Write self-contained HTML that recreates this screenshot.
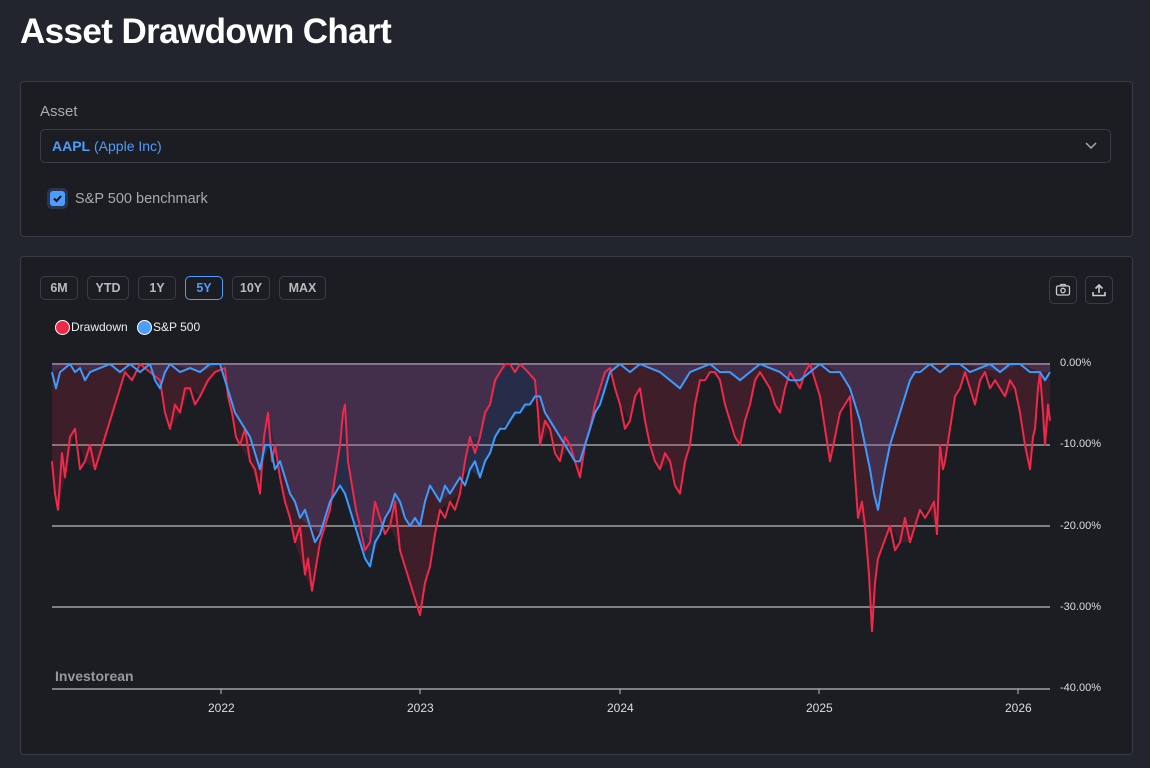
<!DOCTYPE html>
<html><head><meta charset="utf-8"><style>
body{margin:0;width:1150px;height:768px;background:#22252e;font-family:"Liberation Sans",sans-serif;position:relative;overflow:hidden;color:#ddd}
.abs{position:absolute}
h1{position:absolute;left:20px;top:12px;margin:0;font-size:35px;font-weight:bold;color:#fff;letter-spacing:-0.6px}
.panel{position:absolute;left:20px;width:1111px;background:#1b1d23;border:1px solid #383b44;border-radius:4px}
.btn{position:absolute;top:276px;height:24px;border:1px solid #3a3d45;border-radius:5px;font-size:12.5px;font-weight:bold;color:#bbb;text-align:center;line-height:23px;box-sizing:border-box}
.ib{position:absolute;top:276px;width:28px;height:28px;border:1px solid #3a3d45;border-radius:5px;box-sizing:border-box}
.yl{position:absolute;left:1060px;font-size:11px;color:#ddd}
.xl{position:absolute;top:701px;font-size:12px;color:#ddd}
</style></head><body>
<h1>Asset Drawdown Chart</h1>
<div class="panel" style="top:81px;height:154px"></div>
<div class="abs" style="left:40px;top:103px;font-size:15px;color:#aaa">Asset</div>
<div class="abs" style="left:40px;top:129px;width:1071px;height:34px;border:1px solid #3a3d45;border-radius:5px;box-sizing:border-box"></div>
<div class="abs" style="left:52px;top:138px;font-size:14px;color:#4d9dff"><b>AAPL</b> (Apple Inc)</div>
<svg class="abs" style="left:1085px;top:141px" width="12" height="10"><path d="M1 2 L6 7 L11 2" stroke="#aaa" stroke-width="1.5" fill="none"/></svg>
<div class="abs" style="left:47px;top:188px;width:21px;height:21px;border-radius:5px;background:#2a3550"></div>
<div class="abs" style="left:50px;top:191px;width:15px;height:15px;border-radius:3px;background:#4d9dff"></div>
<svg class="abs" style="left:50px;top:191px" width="15" height="15"><path d="M4 7.5 L6.5 10 L11 5" stroke="#111" stroke-width="2" fill="none"/></svg>
<div class="abs" style="left:75px;top:191px;font-size:14.5px;color:#aaa">S&amp;P 500 benchmark</div>

<div class="panel" style="top:256px;height:497px"></div>
<div class="btn" style="left:40px;width:38px">6M</div>
<div class="btn" style="left:87px;width:42px">YTD</div>
<div class="btn" style="left:138px;width:38px">1Y</div>
<div class="btn" style="left:185px;width:38px;border-color:#4d9dff;color:#4d9dff">5Y</div>
<div class="btn" style="left:232px;width:38px">10Y</div>
<div class="btn" style="left:279px;width:47px">MAX</div>
<div class="ib" style="left:1049px"></div><div class="ib" style="left:1085px"></div>
<svg class="abs" style="left:1055px;top:283px" width="16" height="14"><rect x="1.5" y="3" width="13" height="9" rx="1.5" stroke="#ccc" fill="none" stroke-width="1.3"/><path d="M5 3 L6 1.5 H10 L11 3" stroke="#ccc" fill="none" stroke-width="1.3"/><circle cx="8" cy="7.5" r="2.2" stroke="#ccc" fill="none" stroke-width="1.3"/></svg>
<svg class="abs" style="left:1091px;top:282px" width="16" height="16"><path d="M8 11 V3 M4.5 6.5 L8 3 L11.5 6.5 M2 10 V13.5 H14 V10" stroke="#ccc" fill="none" stroke-width="1.6"/></svg>
<div class="abs" style="left:55px;top:320px;width:13px;height:13px;border-radius:50%;background:#f0284a;border:1px solid #fff"></div>
<div class="abs" style="left:71px;top:320px;font-size:12px;color:#eee">Drawdown</div>
<div class="abs" style="left:137px;top:320px;width:13px;height:13px;border-radius:50%;background:#4d9dff;border:1px solid #fff"></div>
<div class="abs" style="left:153px;top:320px;font-size:12px;color:#eee">S&amp;P 500</div>

<svg class="abs" style="left:0;top:0" width="1150" height="768">
<g stroke="#bbb" stroke-width="1.2"><line x1="52" y1="364" x2="1050" y2="364"/><line x1="52" y1="445" x2="1050" y2="445"/><line x1="52" y1="526" x2="1050" y2="526"/><line x1="52" y1="607" x2="1050" y2="607"/><line x1="52" y1="689" x2="1050" y2="689"/></g>
<g stroke="#bbb"><line x1="221" y1="689" x2="221" y2="694"/><line x1="420" y1="689" x2="420" y2="694"/><line x1="620" y1="689" x2="620" y2="694"/><line x1="819" y1="689" x2="819" y2="694"/><line x1="1018" y1="689" x2="1018" y2="694"/></g>
<g transform="translate(0,364) scale(1,8.1)">
<polygon fill="rgba(240,40,74,0.17)" points="52,0 52,12 58,18 65,14 75,8 85,12 95,13 105,9 115,5 125,1 140,0 160,2 170,8 180,6 190,3 200,4 215,1 225,0.5 232,6 240,10 250,12 260,16 268,6 275,10 285,17 295,22 305,26 312,28 320,22 330,18 340,10 345,5 352,15 360,20 370,22 380,19 390,20 400,23 410,27 420,31 430,25 440,18 450,17 460,16 470,9 480,9 490,5 500,1 510,0 520,0 535,2 540,10 550,8 560,12 570,10 580,14 590,8 600,3 610,0.5 620,5 630,7 640,3 650,10 660,13 670,12 680,16 690,10 700,2 710,1 720,2 730,7 740,10 750,5 760,1 770,3 780,6 790,1 800,3 810,0 820,4 830,12 840,6 850,4 858,19 865,20 872,33 878,24 890,20 900,22 910,22 920,18 930,18 937,21 940,10 945,12 955,4 965,1 975,5 985,1 995,2 1005,4 1015,3 1020,6 1030,13 1035,8 1040,1 1045,10 1050,7 1050,0"/>
<polygon fill="rgba(90,110,220,0.2)" points="52,0 52,1 70,0 90,1 110,0 150,0 160,3 170,0 200,1 220,0 230,4 240,7 250,9 260,13 270,10 280,12 290,16 300,19 310,20 320,21 330,17 340,15 350,18 360,22 370,25 380,21 390,18 400,17 410,20 420,20 430,15 440,17 450,16 460,14 470,13 480,14 490,11 500,8 510,7 520,6 530,5 540,4 550,7 560,9 570,11 580,12 590,8 600,5 610,1 620,0 640,0 660,1 680,3 690,1 710,0 740,2 760,0 780,1 800,2 820,0 840,1 850,3 860,7 870,13 878,18 885,13 895,8 905,4 915,1 930,0 960,0 1000,1 1020,0 1040,1 1050,1 1050,0"/>
<polyline fill="none" stroke="#f0284a" stroke-width="2" vector-effect="non-scaling-stroke" stroke-linejoin="round" points="52,12 55,16 58,18 62,11 65,14 70,9 75,8 80,13 85,12 90,10 95,13 100,11 105,9 110,7 115,5 120,3 125,1 132,2 140,0 150,1 160,2 165,6 170,8 175,5 180,6 185,3 190,3 195,5 200,4 208,2 215,1 225,0.5 228,4 232,6 236,9 240,10 245,8 250,12 255,13 260,16 264,9 268,6 272,12 275,10 280,14 285,17 290,19 295,22 300,20 305,26 308,24 312,28 316,25 320,22 325,20 330,18 335,14 340,10 343,6 345,5 348,12 352,15 356,18 360,20 365,23 370,22 375,17 380,19 385,21 390,20 395,17 400,23 405,25 410,27 415,29 420,31 425,27 430,25 435,21 440,18 445,19 450,17 455,18 460,16 465,12 470,9 475,11 480,9 485,6 490,5 495,2 500,1 505,0 510,0 515,1 520,0 528,1 535,2 538,6 540,10 545,7 550,8 555,11 560,12 565,9 570,10 575,12 580,14 585,10 590,8 595,5 600,3 605,1 610,0.5 615,3 620,5 625,8 630,7 635,4 640,3 645,7 650,10 655,12 660,13 665,11 670,12 675,15 680,16 685,12 690,10 695,5 700,2 705,2 710,1 715,1 720,2 725,5 730,7 735,9 740,10 745,7 750,5 755,2 760,1 765,2 770,3 775,5 780,6 785,3 790,1 795,2 800,3 805,1 810,0 815,2 820,4 825,8 830,12 835,9 840,6 845,5 850,4 854,12 858,19 862,17 865,20 869,26 872,33 875,27 878,24 884,22 890,20 895,23 900,22 905,19 910,22 915,20 920,18 925,19 930,18 934,17 937,21 940,10 943,13 945,12 950,8 955,4 960,3 965,1 970,3 975,5 980,2 985,1 990,3 995,2 1000,3 1005,4 1010,2 1015,3 1020,6 1025,10 1030,13 1033,9 1035,8 1038,3 1040,1 1043,6 1045,10 1048,5 1050,7"/>
<polyline fill="none" stroke="#3d9bff" stroke-width="2" vector-effect="non-scaling-stroke" stroke-linejoin="round" points="52,1 56,3 60,1 65,0.5 70,0 75,1 80,0.5 85,2 90,1 100,0.5 110,0 120,1 130,0 140,1 150,0 155,2 160,3 165,1 170,0 180,1 190,0.5 200,1 210,0 220,0 225,2 230,4 235,6 240,7 245,8 250,9 255,11 260,13 265,10 270,10 275,13 280,12 285,14 290,16 295,17 300,19 305,18 310,20 315,22 320,21 325,19 330,17 335,16 340,15 345,16 350,18 355,20 360,22 365,24 370,25 375,22 380,21 385,19 390,18 395,16 400,17 405,19 410,20 415,19 420,20 425,17 430,15 435,16 440,17 445,15 450,16 455,15 460,14 465,15 470,13 475,12 480,14 485,12 490,11 495,9 500,8 505,8 510,7 515,6 520,6 525,5 530,5 535,4 540,4 545,6 550,7 555,8 560,9 565,10 570,11 575,12 580,12 585,10 590,8 595,6 600,5 605,3 610,1 615,0.5 620,0 630,1 640,0 650,0.5 660,1 670,2 680,3 685,2 690,1 700,0.5 710,0 720,1 730,1 740,2 750,1 760,0 770,0.5 780,1 790,2 800,2 810,1 820,0 830,1 840,1 845,2 850,3 855,5 860,7 865,10 870,13 874,16 878,18 882,15 885,13 890,10 895,8 900,6 905,4 910,2 915,1 920,1 930,0 940,1 950,0 960,0 970,1 980,0.5 990,0 1000,1 1010,0 1020,0 1030,1 1040,1 1045,2 1050,1"/>
</g>
</svg>
<div class="yl" style="top:357px">0.00%</div>
<div class="yl" style="top:438px">-10.00%</div>
<div class="yl" style="top:520px">-20.00%</div>
<div class="yl" style="top:601px">-30.00%</div>
<div class="yl" style="top:682px">-40.00%</div>
<div class="xl" style="left:208px">2022</div>
<div class="xl" style="left:407px">2023</div>
<div class="xl" style="left:607px">2024</div>
<div class="xl" style="left:806px">2025</div>
<div class="xl" style="left:1005px">2026</div>
<div class="abs" style="left:55px;top:668px;font-size:14px;font-weight:bold;color:#999">Investorean</div>
</body></html>
